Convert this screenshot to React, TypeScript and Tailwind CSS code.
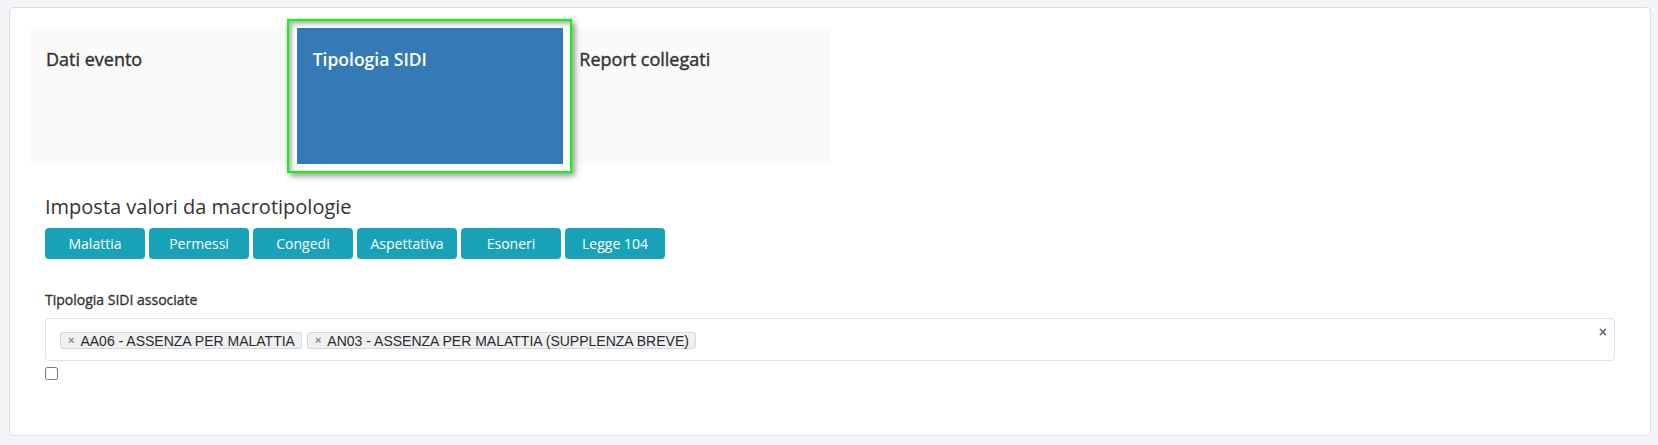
import { useState } from 'react';

const macroTypes = ['Malattia', 'Permessi', 'Congedi', 'Aspettativa', 'Esoneri', 'Legge 104'];

const initialTags = ['AA06 - ASSENZA PER MALATTIA', 'AN03 - ASSENZA PER MALATTIA (SUPPLENZA BREVE)'];

export default function App() {
  const [tags, setTags] = useState(initialTags);
  const [checked, setChecked] = useState(false);

  return (
    <div className="min-h-[445px] bg-[#f4f5f9] pt-[7px] pl-[9px] pr-[7px] pb-[9px] font-['Open_Sans',sans-serif] text-[#333]">
      <div className="h-[429px] rounded border border-[#dcdfe4] bg-white p-5">
        {/* tabs */}
        <div className="grid h-[136px] w-[800px] grid-cols-3 bg-[#fafafa]">
          <div className="px-4 pt-5 text-[18px] leading-[22px] text-[#333] [-webkit-text-stroke:0.4px_#333]">Dati evento</div>
          <div className="relative">
            <div className="absolute -top-[9px] -bottom-[9px] -left-[10px] -right-[9px] border-2 border-[#00ff00] bg-white shadow-[3px_3px_6px_rgba(0,0,0,0.4),inset_3px_3px_4px_rgba(0,0,0,0.3)]" />
            <div className="relative h-full bg-[#337ab7] px-4 pt-5 text-[17.5px] font-semibold leading-[22px] text-white">
              Tipologia SIDI
            </div>
          </div>
          <div className="px-4 pt-5 text-[18px] leading-[22px] text-[#333] [-webkit-text-stroke:0.4px_#333]">Report collegati</div>
        </div>

        <div className="px-[15px]">
          <h5 className="mt-[31px] mb-[9px] text-[20px] leading-[24px] font-normal text-[#333]">Imposta valori da macrotipologie</h5>
          <div className="flex gap-1">
            {macroTypes.map((m) => (
              <button
                key={m}
                className="h-[31px] w-[100px] rounded bg-[#17a2b8] text-sm text-white hover:bg-[#138496]"
              >
                {m}
              </button>
            ))}
          </div>

          <label className="mt-[30px] mb-2 block text-sm leading-[21px] text-[#333] [-webkit-text-stroke:0.35px_#333]">
            Tipologia SIDI associate
          </label>
          <div className="relative h-[43px] rounded border border-[#dfe3e6] bg-white pt-[13px] pl-[14px]">
            <div className="flex gap-[5px] font-['Liberation_Sans',Arial,sans-serif]">
              {tags.map((t) => (
                <span
                  key={t}
                  className="flex h-[17px] items-center rounded-[3px] border border-[#d5d9dc] bg-[#eef0f2] pl-[7px] pr-[6px] text-sm leading-none text-[#2b2b2b]"
                >
                  <button
                    className="mr-[6px] text-[11px] font-bold text-[#888]"
                    onClick={() => setTags(tags.filter((x) => x !== t))}
                  >
                    ×
                  </button>
                  {t}
                </span>
              ))}
            </div>
            <button
              className="absolute top-[3px] right-[7px] font-['Liberation_Sans',Arial,sans-serif] text-[14px] font-bold text-[#5f6b78]"
              onClick={() => setTags([])}
            >
              ×
            </button>
          </div>
          <input
            type="checkbox"
            checked={checked}
            onChange={(e) => setChecked(e.target.checked)}
            className="mt-[6px] block h-[13px] w-[13px]"
          />
        </div>
      </div>
    </div>
  );
}
